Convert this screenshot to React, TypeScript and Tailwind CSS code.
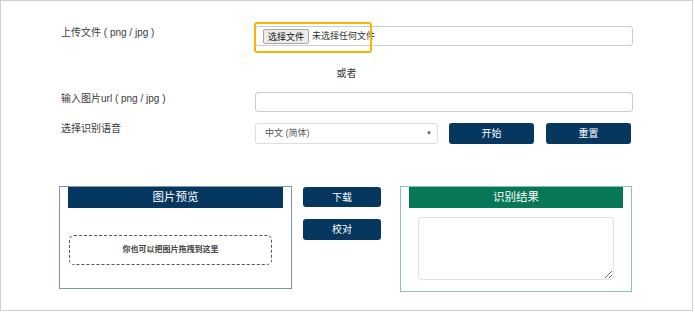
import React from "react";

const NAVY = "bg-[#06375f]";

export default function App() {
  return (
    <div
      className="w-[693px] h-[311px] border border-[#d0d0d0] bg-white pl-[59px] pt-[25px] text-[#3a3a3a]"
      style={{ fontFamily: '"Liberation Sans", "Noto Sans CJK SC", sans-serif' }}
    >
      {/* upload row */}
      <div className="flex items-start">
        <div className="w-[195px] text-[10px] leading-[14px] pl-[1px]">上传文件 ( png / jpg )</div>
        <div className="relative w-[378px] h-[20px] border border-[#ccc] rounded-[3px] flex items-center pl-[7px]">
          <span className="h-[15px] px-[4px] border border-[#a5a5a5] rounded-[2px] bg-[#ececec] text-[9px] leading-[14px] text-[#111]">
            选择文件
          </span>
          <span className="ml-[3px] text-[9px] leading-[14px] text-[#333]">未选择任何文件</span>
          {/* focus highlight */}
          <div className="absolute left-[-2px] top-[-5px] w-[118px] h-[31px] border-2 border-[#f7b500] rounded-[3px]" />
        </div>
      </div>

      <div className="-ml-[59px] w-[691px] mt-[21px] text-center text-[10px] leading-[14px]">或者</div>

      {/* url row */}
      <div className="flex items-start mt-[11px]">
        <div className="w-[195px] text-[10px] leading-[14px] pl-[1px]">输入图片url ( png / jpg )</div>
        <div className="w-[378px] h-[20px] border border-[#ccc] rounded-[3px]" />
      </div>

      {/* language row */}
      <div className="flex items-start mt-[11px]">
        <div className="w-[195px] text-[10px] leading-[14px] pl-[1px] -mt-[1px]">选择识别语音</div>
        <div className="w-[183px] h-[21px] border border-[#ddd] rounded-[3px] flex items-center justify-between pl-[9px] pr-[5px]">
          <span className="text-[9px] text-[#555]">中文 (简体)</span>
          <span className="text-[6px] text-[#555]">▼</span>
        </div>
        <button className={`ml-[11px] w-[85px] h-[21px] rounded-[3px] ${NAVY} text-white text-[10px]`}>开始</button>
        <button className={`ml-[12px] w-[85px] h-[21px] rounded-[3px] ${NAVY} text-white text-[10px]`}>重置</button>
      </div>

      {/* bottom panels */}
      <div className="flex items-start mt-[42px] -ml-[1px]">
        <div className="w-[233px] h-[103px] border border-[#8396ae]">
          <div className={`mx-[8px] h-[21px] ${NAVY} text-white text-[11.5px] leading-[21px] text-center`}>图片预览</div>
          <div className="ml-[9px] mt-[27px] w-[203px] h-[30px] border border-dashed border-[#555] rounded-[5px] flex items-center justify-center text-[8px] font-semibold text-[#444]">
            你也可以把图片拖拽到这里
          </div>
        </div>

        <div className="ml-[11px] w-[78px] flex flex-col gap-[12px] pt-[1px]">
          <button className={`h-[20px] rounded-[3px] ${NAVY} text-white text-[10px]`}>下载</button>
          <button className={`h-[21px] rounded-[3px] ${NAVY} text-white text-[10px]`}>校对</button>
        </div>

        <div className="ml-[19px] w-[232px] h-[106px] border border-[#86c4ae]">
          <div className="mx-[8px] h-[21px] bg-[#077757] text-white text-[11.5px] leading-[21px] text-center">识别结果</div>
          <textarea
            readOnly
            className="block ml-[17px] mt-[9px] w-[196px] h-[63px] border border-[#e2e2e2] rounded-[3px] resize"
          />
        </div>
      </div>
    </div>
  );
}
